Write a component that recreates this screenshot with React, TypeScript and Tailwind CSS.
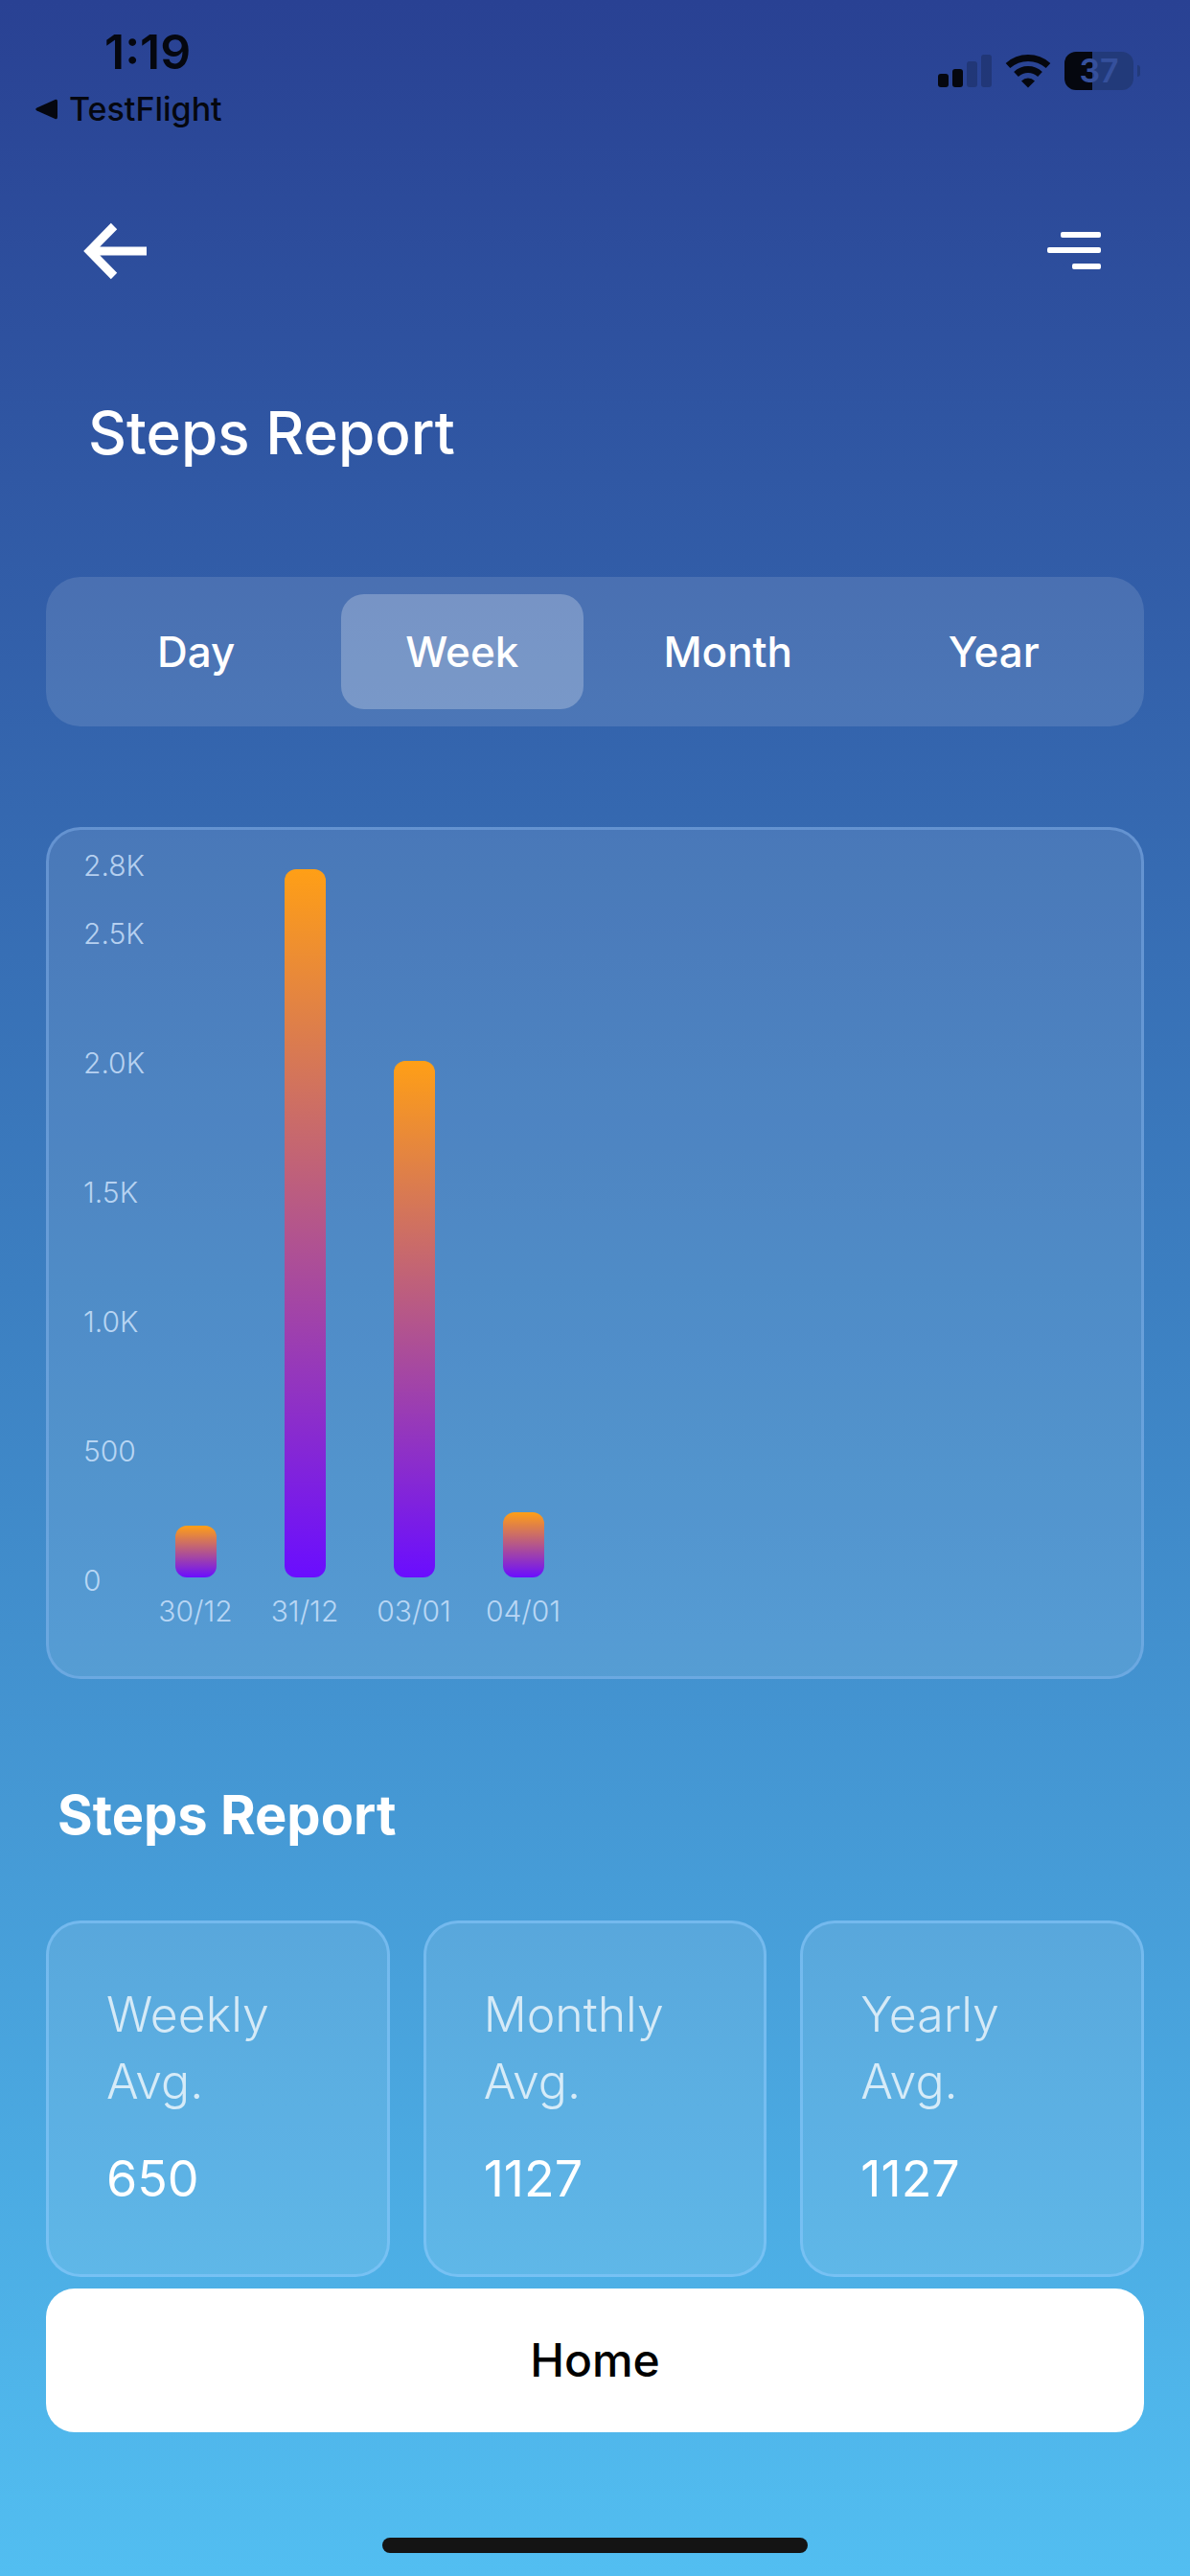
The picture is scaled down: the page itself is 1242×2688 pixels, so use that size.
import { useState } from "react"

const tabs = ["Day", "Week", "Month", "Year"]

const bars = [
  { label: "30/12", steps: 200 },
  { label: "31/12", steps: 2742 },
  { label: "03/01", steps: 2000 },
  { label: "04/01", steps: 252 },
]

const ticks = ["2.5K", "2.0K", "1.5K", "1.0K", "500", "0"]

// Steps represented by the full height of the plot area
const CHART_MAX = 2830

const averages = [
  { label: "Weekly Avg.", value: 650 },
  { label: "Monthly Avg.", value: 1127 },
  { label: "Yearly Avg.", value: 1127 },
]

const StatusBar = () => (
  <div className="flex items-start justify-between pt-[26px] pl-9 pr-[52px] text-[#05070f]">
    <div>
      <div className="pl-[73px] text-[50px] leading-[56px] font-semibold">1:19</div>
      <a href="#testflight" className="mt-2 flex items-center gap-3 text-[34px] leading-[48px] font-medium">
        <svg width="24" height="22" viewBox="0 0 24 22" fill="currentColor">
          <path d="M2.500 9.500 21.500 1Q24 .2 24 3V19Q24 21.800 21.500 21L2.500 12.500Q0 11 2.500 9.500Z" />
        </svg>
        TestFlight
      </a>
    </div>

    <div className="flex items-center gap-[14px] pt-7">
      <svg width="56" height="36" viewBox="0 0 56 36" fill="currentColor">
        <rect x="0" y="21" width="11" height="14" rx="3" />
        <rect x="15" y="16" width="11" height="19" rx="3" />
        <rect x="30" y="8" width="11" height="27" rx="3" opacity="0.22" />
        <rect x="45" y="1" width="11" height="34" rx="3" opacity="0.22" />
      </svg>
      <svg width="48" height="36" viewBox="0 0 48 36" fill="none" stroke="currentColor" strokeWidth="7">
        <path d="M3 12.500Q12 4.500 24 4.500T45 12.500" />
        <path d="M11.500 21.500Q17 16.500 24 16.500T36.500 21.500" />
        <path d="M24 25.500Q28 25.500 31 28.500L24 35.500 17 28.500Q20 25.500 24 25.500Z" fill="currentColor" stroke="none" />
      </svg>
      <div className="flex items-center gap-1">
        <div className="flex h-10 w-[72px] items-center justify-center rounded-[12px] bg-linear-to-r/srgb from-[#05070f] from-40% to-[#223a7a] to-40% text-[34px] leading-10 font-semibold text-[#35509c]">
          37
        </div>
        <span className="h-3 w-[3px] rounded-r-full bg-[#223a7a]" />
      </div>
    </div>
  </div>
)

const StepsChart = () => (
  <section className="mt-[105px] flex rounded-[36px] border-[3px] border-[#8fbcf5]/40 bg-white/10 pt-[17px] pb-12 pl-9 text-[30px] leading-10 font-light text-[#d5e8ff]/80">
    <div className="flex w-[60px] flex-col whitespace-nowrap">
      <span className="mb-[31px]">2.8K</span>
      <div className="flex flex-col gap-[95px]">
        {ticks.map((tick) => (
          <span key={tick}>{tick}</span>
        ))}
      </div>
    </div>

    <div className="flex">
      {bars.map((bar) => (
        <div key={bar.label} className="flex w-[114px] flex-col items-center">
          <div className="flex h-[763px] items-end">
            <div
              className="w-[43px] rounded-[12px] bg-linear-to-b/srgb from-[#ff9f16] to-[#6a0dff]"
              style={{ height: `${(bar.steps / CHART_MAX) * 100}%` }}
            />
          </div>
          <span className="mt-[15px]">{bar.label}</span>
        </div>
      ))}
    </div>
  </section>
)

const App = () => {
  const [activeTab, setActiveTab] = useState("Week")

  return (
    <div className="flex min-h-screen flex-col bg-linear-to-b/srgb from-[#294193] via-[#3c7fc1] to-[#52bef1] font-['Inter',sans-serif] text-white">
      <StatusBar />

      <header className="mt-[94px] flex items-center justify-between pr-[93px] pl-[87px]">
        <button aria-label="Back" className="cursor-pointer">
          <svg width="66" height="60" viewBox="0 0 66 60" fill="none" stroke="currentColor" strokeWidth="9">
            <path d="M66 30H8M32 4 6.500 30 32 56" />
          </svg>
        </button>
        <button aria-label="Menu" className="cursor-pointer">
          <svg width="56" height="40" viewBox="0 0 56 40" fill="currentColor">
            <rect x="14" y="0" width="42" height="6" rx="2" />
            <rect x="0" y="16" width="56" height="6" rx="2" />
            <rect x="26" y="33" width="30" height="6" rx="2" />
          </svg>
        </button>
      </header>

      <main className="px-12">
        <h1 className="mt-[120px] pl-11 text-[62px] leading-[80px] font-medium">Steps Report</h1>

        <div className="mt-[110px] grid grid-cols-4 gap-6 rounded-[36px] bg-white/12 px-[30px] py-[18px]">
          {tabs.map((tab) => (
            <button
              key={tab}
              onClick={() => setActiveTab(tab)}
              className={`h-[120px] cursor-pointer rounded-[24px] text-[44px] font-medium ${
                activeTab === tab ? "bg-white/25" : ""
              }`}
            >
              {tab}
            </button>
          ))}
        </div>

        <StepsChart />

        <h2 className="mt-[110px] pl-3 text-[56px] leading-[64px] font-bold">Steps Report</h2>

        <div className="mt-[78px] grid grid-cols-3 gap-[35px]">
          {averages.map((item) => (
            <div
              key={item.label}
              className="rounded-[36px] border-[3px] border-[#8fccff]/50 bg-white/10 px-[60px] pt-[60px] pb-16 leading-[70px]"
            >
              <p className="w-min text-[50px] font-light text-white/75">{item.label}</p>
              <p className="mt-8 text-[52px]">{item.value}</p>
            </div>
          ))}
        </div>

        <button className="mt-3 h-[150px] w-full cursor-pointer rounded-[30px] bg-white text-[48px] font-medium text-black">
          Home
        </button>
      </main>

      <div className="mx-auto mt-auto mb-6 h-4 w-[444px] rounded-full bg-[#141414]" />
    </div>
  )
}

export default App
